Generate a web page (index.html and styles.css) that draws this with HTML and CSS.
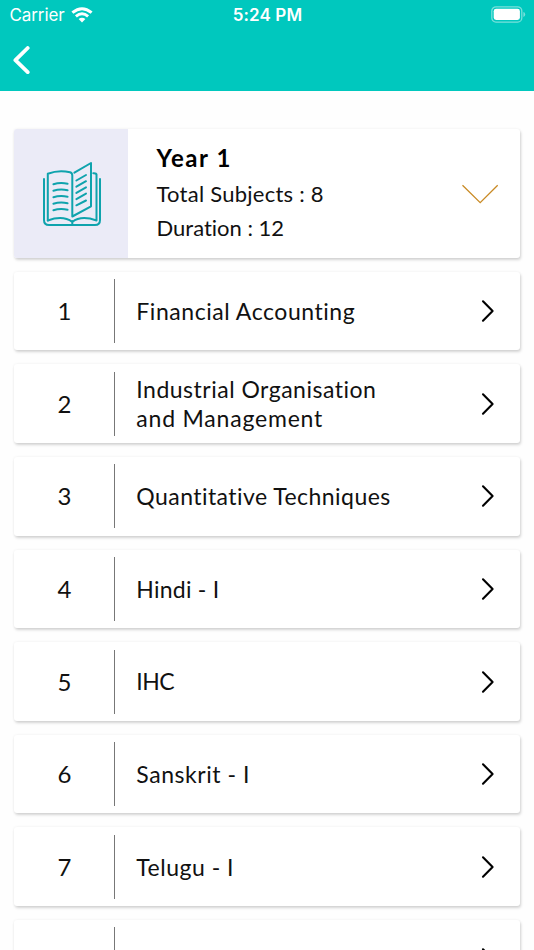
FILE: index.html
```html
<!DOCTYPE html>
<html lang="en">
<head>
<meta charset="utf-8">
<title>Subjects</title>
<link rel="stylesheet" href="styles.css">
</head>
<body>
<svg class="defs" width="0" height="0"><symbol id="next" viewBox="0 0 14 24"><path d="M2 2.3 L11.6 12 L2 21.7"/></symbol></svg>
<div class="screen">
  <header>
    <div class="status">
      <div class="carrier"><span>Carrier</span>
        <svg class="wifi" viewBox="0 0 22 16" width="22" height="16"><path d="M1.4 5.7 Q11 -2.3 20.6 5.7M4.9 9.3 Q11 4.3 17.1 9.3"/><path class="dot" d="M7.6 12 Q11 9.3 14.4 12 L11 15.4Z"/></svg>
      </div>
      <time>5:24 PM</time>
      <svg class="battery" viewBox="0 0 35 17" width="35" height="17"><rect class="shell" x=".8" y=".8" width="30" height="15.3" rx="4.2"/><rect class="charge" x="2.7" y="2.8" width="26.2" height="11.2" rx="2.4"/><path class="cap" d="M32.4 6 Q34.2 6.5 34.2 8.4 T32.4 10.9Z"/></svg>
    </div>
    <svg class="back" viewBox="0 0 18 28" width="18" height="28"><path d="M15.7 2 L3.4 14.2 L15.7 26.2"/></svg>
  </header>
  <main>
    <section class="card summary">
      <div class="cover"><svg viewBox="0 0 60 68" width="60" height="68"><g class="outline"><path d="M2 19 V60 Q2 65 7 65 H53 Q58 65 58 60 V19"/><path d="M5.8 60.5 V13.7 Q17 9.5 28 12.3 Q30.3 13 30.3 15.5 V56.5 L49 46.3 V3 L32.4 12.7"/><path d="M5.8 60.5 Q21 55 30.3 62 Q39 55 54.5 60.5 V14.5 Q54.3 13 51.3 13.2M30.3 61 V64.5"/><path d="M11.4 24.2 Q18 22.3 25.6 23.7M11.4 30.7 Q18 28.8 25.6 30.2M11.4 37.2 Q18 35.3 25.6 36.7M11.4 43.7 Q18 41.8 25.6 43.2M11.4 50.2 Q18 48.3 25.6 49.7"/><path d="M34.4 20.5 L44 15M34.4 26.7 L44 21.2M34.4 32.9 L44 27.4M34.4 39.1 L44 33.6M34.4 45.3 L44 40.5"/></g></svg></div>
      <div class="details"><h1>Year 1</h1><p class="total">Total Subjects : 8</p><p class="duration">Duration : 12</p></div>
      <svg class="expand" viewBox="0 0 38 21" width="38" height="21"><path d="M1.5 1.2 L19.2 18.6 L36.7 1.2"/></svg>
    </section>
    <div class="card row"><b>1</b><span class="finance">Financial Accounting</span><svg><use href="#next"/></svg></div>
    <div class="card row"><b>2</b><span class="industry">Industrial Organisation<br><i>and Management</i></span><svg><use href="#next"/></svg></div>
    <div class="card row"><b>3</b><span class="quant">Quantitative Techniques</span><svg><use href="#next"/></svg></div>
    <div class="card row"><b>4</b><span class="hindi">Hindi - I</span><svg><use href="#next"/></svg></div>
    <div class="card row"><b>5</b><span class="ihc">IHC</span><svg><use href="#next"/></svg></div>
    <div class="card row"><b>6</b><span class="sanskrit">Sanskrit - I</span><svg><use href="#next"/></svg></div>
    <div class="card row"><b>7</b><span class="telugu">Telugu - I</span><svg><use href="#next"/></svg></div>
    <div class="card row"><b></b><span></span><svg><use href="#next"/></svg></div>
  </main>
</div>
</body>
</html>
```
FILE: styles.css
```css
* { box-sizing: border-box; }
body { margin: 0; background: #fff; color: #111; font-family: Lato, sans-serif; font-variant-ligatures: none; }
.defs { display: none; }
.screen { width: 534px; height: 950px; overflow: hidden; background: #fefefe; }
header { height: 91px; background: #00c8be; color: #fff; }
.status { display: grid; grid-template-columns: 1fr auto 1fr; height: 30px; align-items: center; padding: 0 8.5px 0 9.5px; font: 17px/20px Inter, sans-serif; }
.carrier { display: flex; align-items: center; gap: 6px; letter-spacing: -.1px; }
.carrier svg { margin-top: -1px; }
.status time { font-weight: 600; font-size: 17px; letter-spacing: .1px; }
.wifi { fill: none; stroke: #fff; stroke-width: 3; }
.wifi .dot { fill: #fff; stroke: none; }
.battery { justify-self: end; margin-top: -1px; }
.shell { fill: none; stroke: #79e0db; stroke-width: 1.3; }
.charge { fill: #fff; }
.cap { fill: #79e0db; }
.back { display: block; margin: 16px 0 0 12px; fill: none; stroke: #fff; stroke-width: 3.8; stroke-linecap: round; stroke-linejoin: round; }
main { display: flex; flex-direction: column; gap: 14px; padding: 38.3px 14.5px 0 14.3px; }
.card { flex: none; display: flex; align-items: center; background: #fff; border-radius: 3px; box-shadow: 1px 2px 3px rgba(0,0,0,.16), 0 0 3px rgba(0,0,0,.06); }
.summary { height: 128.6px; }
.cover { width: 113.7px; height: 100%; display: flex; align-items: center; justify-content: center; padding: 1px 0 0 1px; background: #ebebf7; border-radius: 3px 0 0 3px; }
.outline { fill: none; stroke: #0fa3ad; stroke-width: 2; stroke-linejoin: round; stroke-linecap: round; }
.details { flex: 1; padding: 0 0 4px 28.5px; }
h1, p { margin: 0; white-space: nowrap; }
h1 { font-size: 24px; line-height: 39px; font-weight: 700; color: #000; letter-spacing: 1.6px; }
p { font-size: 22px; line-height: 34px; }
.total { letter-spacing: .25px; }
.duration { letter-spacing: 0; }
.expand { margin: 1px 20.5px 0 0; fill: none; stroke: #c98a24; stroke-width: 1.3; }
.row { height: 78.6px; }
.row b { width: 100.5px; height: 64px; display: flex; align-items: center; justify-content: center; border-right: 1px solid #777; font-weight: 400; font-size: 24px; padding: 0 0 1px 1px; }
.row span { flex: 1; padding-left: 21.5px; font-size: 23px; line-height: 28.5px; white-space: nowrap; }
.finance { letter-spacing: .55px; }
.industry { letter-spacing: .5px; }
.row i { font-style: normal; letter-spacing: .8px; }
.quant { letter-spacing: .45px; }
.hindi { letter-spacing: .25px; }
.ihc { letter-spacing: -.5px; }
.sanskrit { letter-spacing: .55px; }
.telugu { letter-spacing: .5px; }
.row svg { width: 14px; height: 24px; margin-right: 25px; fill: none; stroke: #000; stroke-width: 2.1; stroke-linecap: round; stroke-linejoin: round; }
```
